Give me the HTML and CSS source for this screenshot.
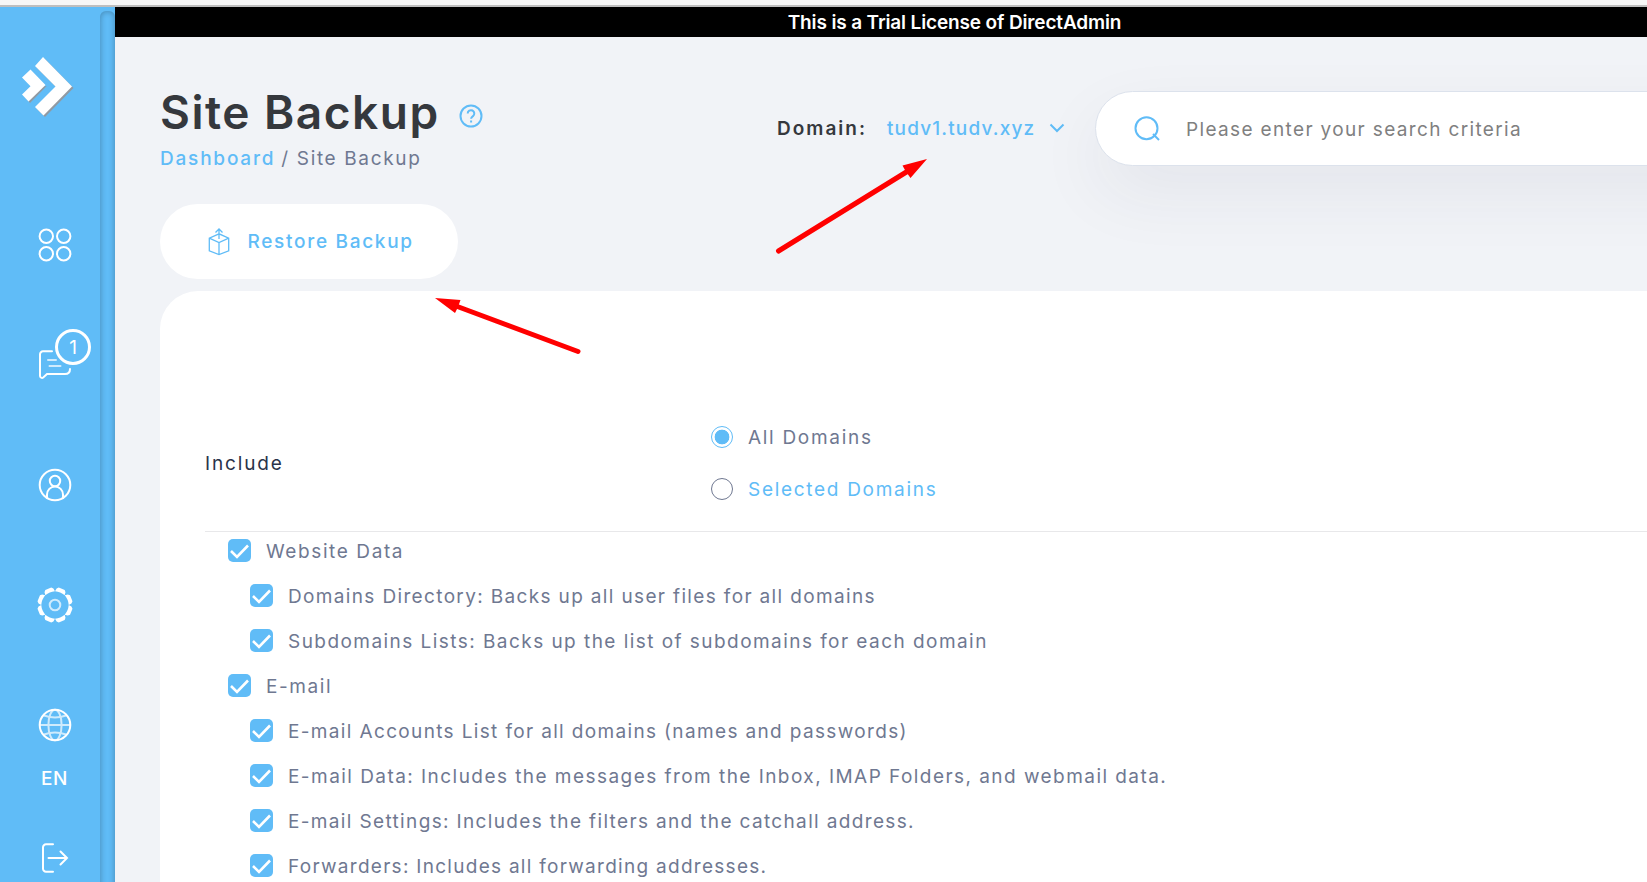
FILE: index.html
```html
<!DOCTYPE html>
<html lang="en">
<head>
<meta charset="utf-8">
<title>Site Backup</title>
<link rel="stylesheet" href="styles.css">
</head>
<body>
<div class="window-edge"></div>
<div class="app">
  <aside class="sidebar">
    <nav class="nav">
      <svg class="logo" width="54" height="64" viewBox="20 55 54 64">
        <path fill="#919aa3" d="M44.5 58.5 73.500 88 45 117 36.500 108.500 57 88 36.500 67.500zM46.700 86 30 103 24 96 32 88z"/>
        <path fill="#fff" d="M43 57 72 86.500 43.500 115.500 35 107 55.500 86.500 35 66zM30.500 69.500 45.500 85 28.500 101.500 22 94.500 30.500 86.300 22 77.500z"/>
      </svg>
      <svg class="icon icon-grid" width="36" height="36" viewBox="0 0 36 36">
        <circle cx="9.300" cy="9.300" r="6.700"/><circle cx="26.700" cy="9.300" r="6.700"/>
        <circle cx="9.300" cy="26.700" r="6.700"/><circle cx="26.700" cy="26.700" r="6.700"/>
      </svg>
      <div class="messages">
        <svg class="icon" width="36" height="36" viewBox="0 0 36 36">
          <path d="M15 6.300H6a3 3 0 0 0-3 3V31a2 2 0 0 0 3.200 1.500L10 29h18q5 0 5-5"/>
          <path class="soft" d="M11 15h8M12.500 21h11"/>
        </svg>
        <span class="badge">1</span>
      </div>
      <svg class="icon icon-user" width="36" height="36" viewBox="0 0 36 36">
        <circle cx="18" cy="18" r="15.300"/><circle cx="18" cy="14" r="5.200"/>
        <path d="M10 31v-3.500a8 8 0 0 1 16 0V31"/>
      </svg>
      <svg class="icon icon-gear" width="36" height="36" viewBox="0 0 36 36">
        <g class="teeth" transform="rotate(22.5 18 18)">
          <path id="tooth" d="M13.200 2.200 14.800.4h6.400l1.600 1.800.4 3.100Q18 3.600 12.800 5.300z"/>
          <use href="#tooth" transform="rotate(45 18 18)"/><use href="#tooth" transform="rotate(90 18 18)"/>
          <use href="#tooth" transform="rotate(135 18 18)"/><use href="#tooth" transform="rotate(180 18 18)"/>
          <use href="#tooth" transform="rotate(225 18 18)"/><use href="#tooth" transform="rotate(270 18 18)"/>
          <use href="#tooth" transform="rotate(315 18 18)"/>
        </g>
        <circle class="soft" cx="18" cy="18" r="5.300"/>
      </svg>
      <svg class="icon icon-globe" width="36" height="36" viewBox="0 0 36 36">
        <circle cx="18" cy="18" r="15.300"/>
        <g class="soft"><ellipse cx="18" cy="18" rx="6.600" ry="15.300"/><path d="M3 18h30M7 8.500q11 4 22 0M7 27.500q11-4 22 0"/></g>
      </svg>
      <span class="lang">EN</span>
      <svg class="icon icon-exit" width="36" height="36" viewBox="0 0 36 36">
        <path d="M16 4.300H9a3 3 0 0 0-3 3v21.400a3 3 0 0 0 3 3h7M11.500 18H30M23.500 11.500 30 18l-6.500 6.500"/>
      </svg>
    </nav>
    <div class="track"></div>
  </aside>
  <main class="main">
    <div class="banner">This is a Trial License of DirectAdmin</div>
    <header class="header">
      <div class="heading">
        <div class="title-row">
          <h1 class="title">Site Backup</h1>
          <svg class="help" width="24" height="24" viewBox="0 0 24 24"><circle cx="12" cy="12" r="10.500"/><path d="M8.700 9.500a3.300 3.300 0 1 1 5.300 2.600c-1.300.9-1.900 1.300-1.900 2.700M12.100 16.500v2"/></svg>
        </div>
        <div class="crumbs"><a class="link">Dashboard</a><span>/ Site Backup</span></div>
      </div>
      <div class="domain">
        <span class="domain-label">Domain:</span>
        <span class="domain-name">tudv1.tudv.xyz</span>
        <svg class="chevron" width="16" height="10" viewBox="0 0 16 10"><path d="M1.500 1.500 8 8l6.500-6.500"/></svg>
      </div>
      <div class="search">
        <svg class="lens" width="26" height="26" viewBox="0 0 26 26"><circle cx="12.500" cy="12.200" r="11"/><path d="m19 18 6 6"/></svg>
        <span class="placeholder">Please enter your search criteria</span>
      </div>
    </header>
    <button class="restore">
      <svg class="box" width="22" height="28" viewBox="0 0 22 28"><path d="m11 5.800-9.700 4.400v12.600L11 26.600l9.700-3.800V10.200zM1.300 10.200 11 14.500l9.700-4.300M11 14.500v12M11 11V1.500M7.500 4.500 11 1l3.500 3.500"/></svg>
      <span>Restore Backup</span>
    </button>
    <section class="card">
      <div class="include">
        <span class="include-label">Include</span>
        <div class="options">
          <label class="option"><span class="radio radio-on"></span><span>All Domains</span></label>
          <label class="option option-link"><span class="radio"></span><span>Selected Domains</span></label>
        </div>
      </div>
      <ul class="list">
        <li class="row row-parent"><svg class="check" viewBox="0 0 23 23"><path d="m3 12 6 6L20 6.500"/></svg><span class="text">Website Data</span></li>
        <li class="row row-child"><svg class="check" viewBox="0 0 23 23"><path d="m3 12 6 6L20 6.500"/></svg><span class="text">Domains Directory: Backs up all user files for all domains</span></li>
        <li class="row row-child"><svg class="check" viewBox="0 0 23 23"><path d="m3 12 6 6L20 6.500"/></svg><span class="text text-wide">Subdomains Lists: Backs up the list of subdomains for each domain</span></li>
        <li class="row row-parent"><svg class="check" viewBox="0 0 23 23"><path d="m3 12 6 6L20 6.500"/></svg><span class="text">E-mail</span></li>
        <li class="row row-child"><svg class="check" viewBox="0 0 23 23"><path d="m3 12 6 6L20 6.500"/></svg><span class="text">E-mail Accounts List for all domains (names and passwords)</span></li>
        <li class="row row-child"><svg class="check" viewBox="0 0 23 23"><path d="m3 12 6 6L20 6.500"/></svg><span class="text text-wide">E-mail Data: Includes the messages from the Inbox, IMAP Folders, and webmail data.</span></li>
        <li class="row row-child"><svg class="check" viewBox="0 0 23 23"><path d="m3 12 6 6L20 6.500"/></svg><span class="text">E-mail Settings: Includes the filters and the catchall address.</span></li>
        <li class="row row-child"><svg class="check" viewBox="0 0 23 23"><path d="m3 12 6 6L20 6.500"/></svg><span class="text text-narrow">Forwarders: Includes all forwarding addresses.</span></li>
      </ul>
    </section>
  </main>
</div>
<svg class="arrows" width="1647" height="882" viewBox="0 0 1647 882">
  <path class="shaft" d="M778.500 251 908 171M578 351.500 456 306"/>
  <path class="tip" d="M927 159 902.500 165.500 905.500 171 910.500 178zM435 298 460.500 300 458 307 455 313z"/>
</svg>
</body>
</html>
```
FILE: styles.css
```css
* { box-sizing: border-box; }
html { overflow: hidden; }
body { margin: 0; height: 882px; overflow: hidden; position: relative; background: #f1f3f7; font-family: Inter, "Open Sans", sans-serif; font-size: 19px; letter-spacing: 1px; color: #6f7891; }
.window-edge { height: 7px; background: #f7f7f7; border-bottom: 2px solid #bfbfbf; }
.app { display: flex; height: 875px; overflow: hidden; }
.sidebar { flex: none; width: 115px; display: flex; background: #60bcf7; }
.nav { width: 100px; flex: none; position: relative; display: flex; flex-direction: column; align-items: flex-start; }
.track { width: 15px; height: 900px; margin-top: 4px; border-radius: 6px 6px 0 0; box-shadow: inset 0 0 6px rgba(0, 0, 0, .3); }
.logo { margin: 48px 0 0 20px; flex: none; }
.icon { display: block; flex: none; margin-left: 37px; fill: none; stroke: #fff; stroke-width: 2; stroke-linecap: round; }
.soft { opacity: .7; }
.icon-grid { margin-top: 108px; }
.messages { position: relative; margin-top: 82px; }
.badge { position: absolute; left: 55px; top: -16px; width: 36px; height: 36px; border: 3px solid #fff; border-radius: 50%; background: #60bcf7; color: #fff; display: flex; align-items: center; justify-content: center; letter-spacing: 0; }
.icon-user { margin-top: 86px; }
.icon-gear { margin-top: 84px; }
.teeth { fill: #fff; stroke: none; }
.icon-globe { margin-top: 84px; }
.lang { margin: 22px 0 0 41px; font-weight: 500; color: #fff; line-height: 28px; letter-spacing: .6px; }
.icon-exit { margin-top: 47px; }
.main { flex: none; width: 1679px; }
.banner { height: 30px; padding-top: 1px; background: #000; color: #fff; display: flex; align-items: center; justify-content: center; font-weight: 600; letter-spacing: -.14px; line-height: 28px; }
.header { height: 167px; padding-left: 45px; display: flex; }
.heading { width: 617px; padding-top: 47px; }
.title-row { display: flex; align-items: center; gap: 19px; height: 56px; }
.title { margin: 0; font-size: 46px; font-weight: 600; line-height: 56px; letter-spacing: 1.500px; color: #35383d; }
.help { fill: none; stroke: #60bcf7; stroke-width: 2; margin-top: 7px; }
.crumbs { display: flex; gap: 6px; line-height: 24px; margin-top: 7px; letter-spacing: 1.650px; }
.link { color: #60bcf7; font-weight: 500; letter-spacing: 1.800px; }
.domain { width: 318px; height: 30px; margin-top: 76px; display: flex; align-items: center; font-weight: 500; letter-spacing: 1.150px; }
.domain-label { width: 110px; color: #35383d; font-weight: 600; letter-spacing: 2px; }
.domain-name { width: 162px; color: #60bcf7; }
.chevron, .lens { fill: none; stroke: #60bcf7; stroke-width: 2; }
.search { width: 640px; height: 75px; margin-top: 54px; padding-left: 38px; display: flex; align-items: center; gap: 26px; background: #fff; border: 1px solid #dce2ec; border-radius: 38px; box-shadow: 0 27px 70px rgba(40, 50, 80, .065); color: #808080; letter-spacing: 1.350px; }
.placeholder { padding-top: 2px; }
.restore { display: flex; align-items: center; gap: 18px; width: 298px; height: 75px; margin-left: 45px; padding: 0 0 0 47.500px; border: 0; border-radius: 38px; background: #fff; color: #60bcf7; font: inherit; font-weight: 500; letter-spacing: 1.700px; }
.box { fill: none; stroke: #60bcf7; stroke-width: 1.300; }
.card { margin: 12px 0 0 45px; height: 591px; padding: 115px 0 0 45px; background: #fff; border-radius: 38px 0 0 0; }
.include { height: 126px; padding-bottom: 9px; display: flex; align-items: center; border-bottom: 1px solid #e8e8ea; }
.include-label { width: 506px; margin-top: -2px; color: #2a3349; letter-spacing: 1.850px; }
.options { display: flex; flex-direction: column; gap: 28px; margin-top: -2px; letter-spacing: 1.700px; }
.option { display: flex; align-items: center; gap: 15px; height: 24px; }
.option-link { color: #60bcf7; }
.radio { width: 22px; height: 22px; border: 1px solid #6f7891; border-radius: 50%; background: #fff; }
.radio-on { border-color: #60bcf7; background: radial-gradient(#60bcf7 7px, #fff 7.700px); }
.list { list-style: none; margin: 7px 0 0; padding: 0 0 0 23px; display: flex; flex-direction: column; gap: 22px; letter-spacing: 1.350px; }
.row { display: flex; align-items: center; gap: 15px; height: 23px; }
.row-parent { letter-spacing: 1.600px; }
.row-child { padding-left: 22px; }
.text { padding-top: 2px; }
.text-wide { letter-spacing: 1.450px; }
.text-narrow { letter-spacing: 1.280px; }
.check { width: 23px; height: 23px; border-radius: 5px; background: #60bcf7; fill: none; stroke: #fff; stroke-width: 2.600; }
.arrows { position: absolute; left: 0; top: 0; }
.shaft { stroke: #f00; stroke-width: 5; stroke-linecap: round; }
.tip { fill: #f00; }
```
